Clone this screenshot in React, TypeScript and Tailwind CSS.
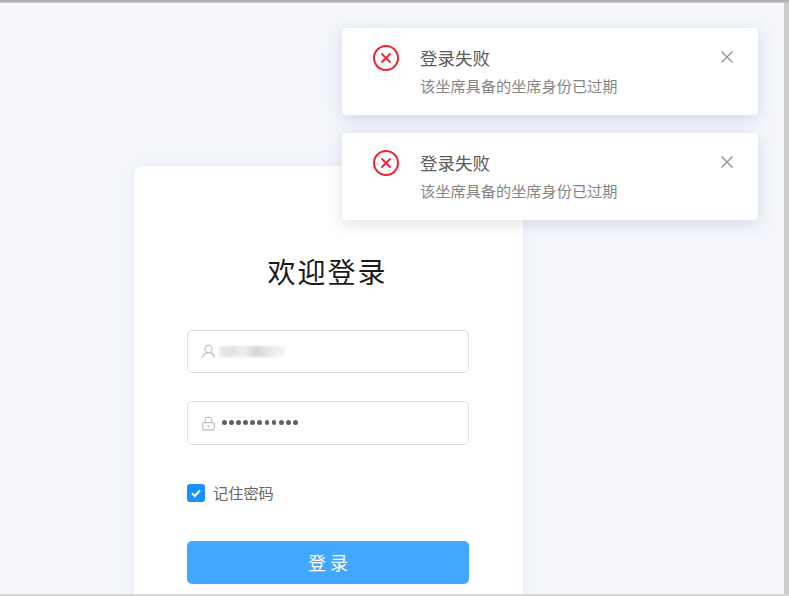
import React from "react";

const cjk = "font-['Noto_Sans_CJK_SC','Liberation_Sans',sans-serif]";

function Toast() {
  return (
    <div className="flex h-[87px] w-[416px] rounded-[4px] bg-white pl-[30px] pr-[24px] pt-[16px] shadow-[0_4px_16px_rgba(60,70,110,0.16)]">
      <svg width="28" height="28" viewBox="0 0 28 28" fill="none" className="shrink-0">
        <circle cx="14" cy="14" r="12" stroke="#f5222d" strokeWidth="2" />
        <path d="M10 10l8 8M18 10l-8 8" stroke="#f5222d" strokeWidth="1.800" strokeLinecap="round" />
      </svg>
      <div className="ml-[20px] flex-1 pt-[1px]">
        <div className="text-[17.5px] leading-[26px] text-[#5c5c5c]">登录失败</div>
        <div className="mt-[5px] text-[15.2px] leading-[19px] text-[#858585]">该坐席具备的坐席身份已过期</div>
      </div>
      <svg width="14" height="14" viewBox="0 0 14 14" fill="none" className="mt-[6px] shrink-0">
        <path d="M1.500 1.500l11 11M12.500 1.500l-11 11" stroke="#8c8c8c" strokeWidth="1.200" />
      </svg>
    </div>
  );
}

export default function App() {
  return (
    <div className={`relative h-[596px] w-[789px] overflow-hidden bg-[#f4f6fc] ${cjk}`}>
      <div className="h-[3px] bg-[linear-gradient(180deg,#a8a8a8,#c8c8c8)]" />
      <div className="flex h-[591px]">
        <div className="min-w-0 flex-1 overflow-hidden pl-[134px] pt-[163px]">
          <div className="h-[480px] w-[389px] rounded-t-[8px] bg-white px-[53px] pt-[85px] shadow-[0_0_12px_rgba(90,120,220,0.08)]">
            <h1 className="pr-[2px] text-center text-[28px] font-normal leading-[40px] tracking-[2px] text-[#1a1a1a]">欢迎登录</h1>
            <div className="mt-[39px] flex h-[43px] w-[282px] items-center rounded-[5px] border border-[#dcdfe6] bg-white pl-[13px]">
              <svg width="15" height="15" viewBox="0 0 16 16" fill="none" className="shrink-0">
                <circle cx="8" cy="5.200" r="3.800" stroke="#bfbfbf" strokeWidth="1.200" />
                <path d="M1.800 15c.3-3.600 2.500-5.800 6.200-5.800s5.900 2.200 6.200 5.800" stroke="#bfbfbf" strokeWidth="1.200" />
              </svg>
              <div className="ml-[3px] h-[11px] w-[67px] bg-[linear-gradient(90deg,#f5e8e8,#e2e2e2_20%,#f0f0f0_35%,#d6d6d6_55%,#e8e8e8_75%,#f8f8fa)] blur-[1px]" />
            </div>
            <div className="mt-[28px] flex h-[44px] w-[282px] items-center rounded-[5px] border border-[#dcdfe6] bg-white pl-[13px]">
              <svg width="15" height="15" viewBox="0 0 16 16" fill="none" className="shrink-0">
                <rect x="1.800" y="7" width="12.400" height="7.800" rx="1" stroke="#bfbfbf" strokeWidth="1.200" />
                <path d="M4.500 7V4.500a3.500 3.500 0 0 1 7 0V7" stroke="#bfbfbf" strokeWidth="1.200" />
                <rect x="7" y="10" width="2" height="2" fill="#bfbfbf" />
              </svg>
              <div className="mb-[1px] ml-[6px] flex gap-[2.300px]">
                {Array.from({ length: 11 }).map((_, i) => (
                  <span key={i} className="h-[4.800px] w-[4.800px] rounded-full bg-[#5f5f66]" />
                ))}
              </div>
            </div>
            <label className="mt-[39px] flex h-[18px] items-center">
              <span className="flex h-[18px] w-[18px] items-center justify-center rounded-[3px] bg-[#1890ff]">
                <svg width="12" height="12" viewBox="0 0 12 12" fill="none">
                  <path d="M2 6.200l2.800 2.800L10 3.500" stroke="white" strokeWidth="2" />
                </svg>
              </span>
              <span className="mb-[2px] ml-[8px] text-[15.200px] leading-[18px] text-[#666666]">记住密码</span>
            </label>
            <button className="mt-[39px] flex h-[43px] w-[282px] items-center justify-center rounded-[5px] bg-[#42a7ff] pl-[4px] text-[18px] tracking-[4px] text-white">
              登录
            </button>
          </div>
        </div>
        <div className="w-[5px] shrink-0 bg-[#cccccc]" />
      </div>
      <div className="h-[2px] bg-[#d8d8d8]" />
      <div className="absolute left-[342px] top-[28px] flex flex-col gap-[18px]">
        <Toast />
        <Toast />
      </div>
    </div>
  );
}
